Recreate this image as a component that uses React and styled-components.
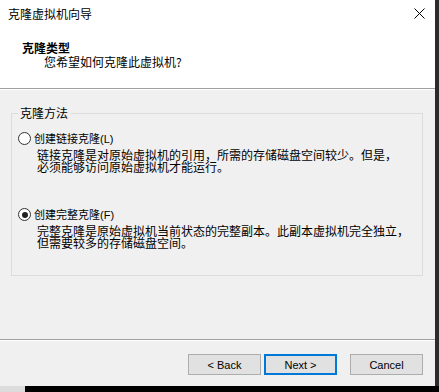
import React from 'react';
import styled, {createGlobalStyle} from 'styled-components';

const GlobalStyle = createGlobalStyle`
    html, body {
        margin : 0;
        padding : 0;
        background : #000;
    }
    body {
        font-family : "Noto Sans CJK SC", "Liberation Sans", sans-serif;
        font-size : 12px;
        color : #000;
    }
`;

const options = [
    {
        id : 'linked',
        label : '创建链接克隆',
        key : 'L',
        lines : ['链接克隆是对原始虚拟机的引用，所需的存储磁盘空间较少。但是，', '必须能够访问原始虚拟机才能运行。'],
        checked : false,
    },
    {
        id : 'full',
        label : '创建完整克隆',
        key : 'F',
        lines : ['完整克隆是原始虚拟机当前状态的完整副本。此副本虚拟机完全独立，', '但需要较多的存储磁盘空间。'],
        checked : true,
    },
];

const Radio = ({checked}) => (
    <RadioDot $checked={checked} />
);

class App extends React.Component{
    render() {
        return (
            <Screen>
                <GlobalStyle />
                <TopRow>
                    <Window>
                        <TitleBar>
                            <span>克隆虚拟机向导</span>
                            <CloseButton>
                                <svg width="11" height="11" viewBox="0 0 11 11">
                                    <path d="M0.5 0.5 L10.5 10.5 M10.5 0.5 L0.5 10.5" stroke="#000" strokeWidth="1" fill="none" />
                                </svg>
                            </CloseButton>
                        </TitleBar>
                        <Header>
                            <HeaderTitle>克隆类型</HeaderTitle>
                            <HeaderSub>您希望如何克隆此虚拟机?</HeaderSub>
                        </Header>
                        <Separator />
                        <Body>
                            <Group>
                                <Legend>克隆方法</Legend>
                                {options.map((item, i)=> (
                                    <Option key={item.id} $first={i === 0}>
                                        <OptionRow>
                                            <Radio checked={item.checked} />
                                            <span>{item.label}<Mnemonic>({item.key})</Mnemonic></span>
                                        </OptionRow>
                                        <Description>
                                            {item.lines.map(line=> <Line key={line}>{line}</Line>)}
                                        </Description>
                                    </Option>
                                ))}
                            </Group>
                        </Body>
                        <Separator />
                        <Footer>
                            <Button>&lt; Back</Button>
                            <Button $primary>Next &gt;</Button>
                            <Button $cancel>Cancel</Button>
                        </Footer>
                    </Window>
                    <SideStrip />
                </TopRow>
                <BottomStrip>
                    <TaskTab />
                </BottomStrip>
            </Screen>
        )
    }
}

const Screen = styled.div`
    display : flex;
    flex-direction: column;
    width : 439px;
    height : 392px;
    overflow : hidden;
`;
const TopRow = styled.div`
    display : flex;
    height : 386px;
`;
const SideStrip = styled.div`
    flex : 1;
    background : #2b2b2b;
`;
const BottomStrip = styled.div`
    flex : 1;
    display : flex;
    background : #000;
`;
const TaskTab = styled.div`
    width : 25px;
    background : #dcdcdc;
`;
const Window = styled.div`
    display : flex;
    flex-direction: column;
    width : 435px;
    height : 386px;
    background : #f0f0f0;
`;
const TitleBar = styled.div`
    display : flex;
    justify-content:space-between;
    align-items : center;
    height : 28px;
    padding : 0 10px 0 8px;
    background : #fff;
    line-height : 28px;
`;
const CloseButton = styled.div`
    display : flex;
    align-items : center;
    height : 28px;
    margin-top : -1px;
`;
const Header = styled.div`
    display : flex;
    flex-direction: column;
    height : 60px;
    padding-top : 13px;
    box-sizing : border-box;
    background : #fff;
`;
const HeaderTitle = styled.div`
    padding-left : 22px;
    font-weight : 700;
    line-height : 14px;
`;
const HeaderSub = styled.div`
    padding-left : 44px;
    line-height : 14px;
`;
const Separator = styled.div`
    height : 0;
    border-top : 1px solid #a0a0a0;
    border-bottom : 1px solid #fff;
`;
const Body = styled.div`
    flex : 1;
    padding : 16px 12px 0 11px;
`;
const Group = styled.fieldset`
    margin : 0;
    padding : 11px 6px 26px 6px;
    border : 1px solid #dcdcdc;
    min-width : 0;
`;
const Legend = styled.legend`
    padding : 0 2px;
    line-height : 14px;
`;
const Option = styled.div`
    margin-top : ${props=> props.$first ? '0' : '34px'};
`;
const OptionRow = styled.div`
    display : flex;
    align-items : center;
    gap : 3px;
    font-size : 11px;
    line-height : 14px;
    white-space : nowrap;
`;
const Mnemonic = styled.span`
    font-family : "Liberation Sans", sans-serif;
    font-size : 11px;
`;
const RadioDot = styled.span`
    position : relative;
    display : inline-block;
    width : 13px;
    height : 13px;
    box-sizing : border-box;
    border : 1px solid #333;
    border-radius : 50%;
    background : #fff;
    flex-shrink : 0;

    &::after {
        content : '';
        display : ${props=> props.$checked ? 'block' : 'none'};
        position : absolute;
        left : 2.5px;
        top : 2.5px;
        width : 6px;
        height : 6px;
        border-radius : 50%;
        background : #222;
    }
`;
const Description = styled.div`
    margin-left : 19px;
    margin-top : 3px;
`;
const Line = styled.div`
    line-height : 12px;
    white-space : nowrap;
`;
const Footer = styled.div`
    display : flex;
    justify-content : flex-end;
    padding : 13px 12px 0 0;
    height : 45px;
    box-sizing : border-box;
`;
const Button = styled.div`
    display : flex;
    align-items : center;
    justify-content : center;
    width : 73px;
    height : 21px;
    box-sizing : border-box;
    margin-left : ${props=> props.$cancel ? '13px' : '3px'};
    border : ${props=> props.$primary ? '2px solid #0078d7' : '1px solid #adadad'};
    background : #e1e1e1;
    font-family : "Liberation Sans", sans-serif;
    font-size : 11px;
    color : #000;
`;

export default App;
